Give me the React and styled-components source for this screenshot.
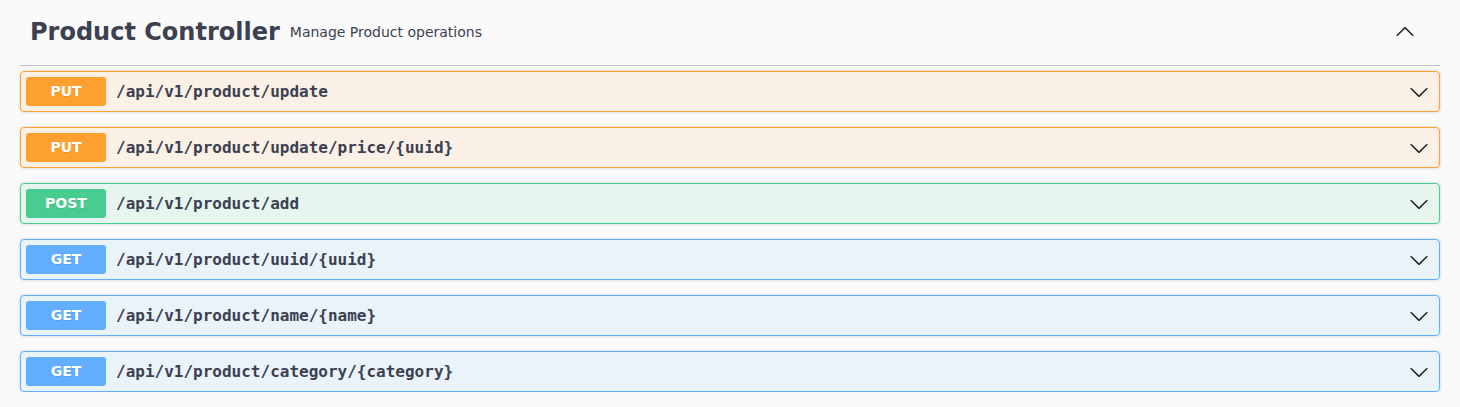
import styled, { createGlobalStyle } from 'styled-components';

const GlobalStyle = createGlobalStyle`
  html, body {
    margin: 0;
    padding: 0;
    background: #fafafa;
  }
  body {
    font-family: "DejaVu Sans", sans-serif;
    color: #3b4151;
  }
`;

const METHODS = {
  put: { color: '#fca130', bg: 'rgba(252, 161, 48, 0.1)' },
  post: { color: '#49cc90', bg: 'rgba(73, 204, 144, 0.1)' },
  get: { color: '#61affe', bg: 'rgba(97, 175, 254, 0.1)' },
};

const operations = [
  { method: 'put', path: '/api/v1/product/update' },
  { method: 'put', path: '/api/v1/product/update/price/{uuid}' },
  { method: 'post', path: '/api/v1/product/add' },
  { method: 'get', path: '/api/v1/product/uuid/{uuid}' },
  { method: 'get', path: '/api/v1/product/name/{name}' },
  { method: 'get', path: '/api/v1/product/category/{category}' },
];

const Arrow = ({ up }) => (
  <ArrowSvg viewBox="0 0 20 20" $up={up}>
    <path d="M17.418 6.109c.272-.268.709-.268.979 0s.271.701 0 .969l-7.908 7.83c-.27.268-.707.268-.979 0l-7.908-7.83c-.27-.268-.27-.701 0-.969.271-.268.709-.268.979 0L10 13.25l7.418-7.141z" />
  </ArrowSvg>
);

const App = () => (
  <>
    <GlobalStyle />
    <Section>
      <TagHeader>
        <TagTitle>Product Controller</TagTitle>
        <TagDescription>Manage Product operations</TagDescription>
        <ExpandButton>
          <Arrow up />
        </ExpandButton>
      </TagHeader>
      <OperationList>
        {operations.map((op) => (
          <Operation key={op.path} $method={op.method}>
            <MethodBadge $method={op.method}>{op.method.toUpperCase()}</MethodBadge>
            <OperationPath>{op.path}</OperationPath>
            <OperationControl>
              <Arrow />
            </OperationControl>
          </Operation>
        ))}
      </OperationList>
    </Section>
  </>
);

export default App;

const Section = styled.div`
  padding: 8px 20px 0;
`;

const TagHeader = styled.div`
  display: flex;
  align-items: center;
  padding: 10px 20px 19px 10px;
  margin-bottom: 5px;
  border-bottom: 1px solid rgba(59, 65, 81, 0.3);
`;

const TagTitle = styled.h3`
  margin: 0;
  font-size: 24px;
  font-weight: 700;
  line-height: 28px;
  color: #3b4151;
`;

const TagDescription = styled.small`
  flex: 1;
  padding: 0 10px;
  font-size: 14px;
  font-weight: 400;
  color: #3b4151;
`;

const ExpandButton = styled.div`
  display: flex;
  align-items: center;
  margin-right: 5px;
`;

const ArrowSvg = styled.svg`
  width: 20px;
  height: 20px;
  fill: #1f2126;
  transform: ${(p) => (p.$up ? 'rotate(180deg)' : 'none')};
`;

const OperationList = styled.div`
  display: flex;
  flex-direction: column;
  gap: 15px;
`;

const Operation = styled.div`
  display: flex;
  align-items: center;
  padding: 5px;
  border: 1px solid ${(p) => METHODS[p.$method].color};
  border-radius: 4px;
  background: ${(p) => METHODS[p.$method].bg};
  box-shadow: 0 0 3px rgba(0, 0, 0, 0.19);
`;

const MethodBadge = styled.span`
  min-width: 80px;
  padding: 6px 0;
  border-radius: 3px;
  background: ${(p) => METHODS[p.$method].color};
  color: #fff;
  font-family: "DejaVu Sans", sans-serif;
  font-size: 14px;
  font-weight: 700;
  line-height: 17px;
  text-align: center;
  text-shadow: 0 1px 0 rgba(0, 0, 0, 0.1);
`;

const OperationPath = styled.span`
  flex: 1;
  padding: 0 10px;
  font-family: "DejaVu Sans Mono", monospace;
  font-size: 16px;
  font-weight: 600;
  color: #3b4151;
`;

const OperationControl = styled.div`
  display: flex;
  align-items: center;
  margin-right: 5px;
`;
